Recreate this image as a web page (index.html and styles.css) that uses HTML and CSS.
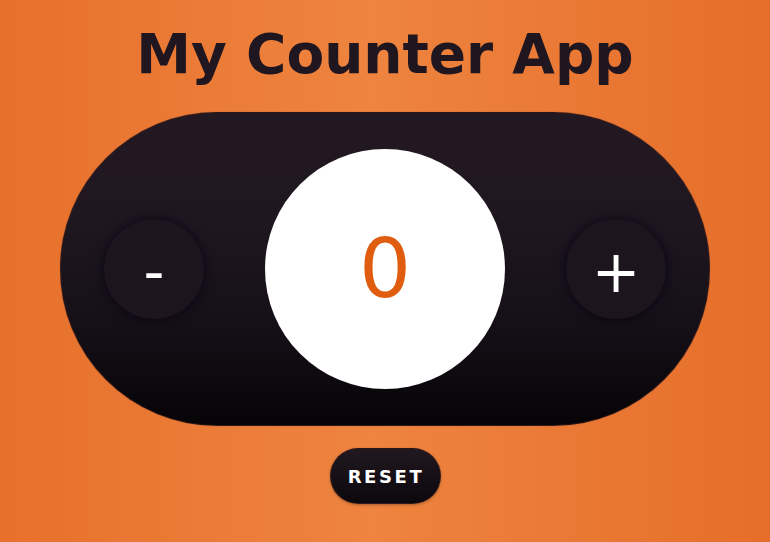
FILE: index.html
```html
<!DOCTYPE html>
<html lang="en">
<head>
<meta charset="utf-8">
<title>My Counter App</title>
<link rel="stylesheet" href="styles.css">
</head>
<body>
  <main class="app">
    <h1 class="title">My Counter App</h1>
    <div class="counter">
      <button class="step" type="button">-</button>
      <div class="display"><span class="value">0</span></div>
      <button class="step" type="button">+</button>
    </div>
    <button class="reset" type="button">RESET</button>
  </main>
</body>
</html>
```

FILE: styles.css
```css
html, body {
  margin: 0;
  height: 100%;
}

body {
  background: linear-gradient(90deg, #e7702c 0%, #ee843f 48%, #e56e2a 100%);
  font-family: "DejaVu Sans", Verdana, sans-serif;
  overflow: hidden;
}

.app {
  display: flex;
  flex-direction: column;
  align-items: center;
  padding-top: 22px;
}

.title {
  margin: 0;
  font-size: 55px;
  font-weight: bold;
  color: #201620;
  line-height: 65px;
}

.counter {
  margin-top: 25px;
  box-sizing: border-box;
  width: 650px;
  height: 314px;
  padding: 0 43px;
  display: flex;
  align-items: center;
  justify-content: space-between;
  border-radius: 157px;
  border: 1px solid rgba(60, 30, 30, 0.7);
  background: linear-gradient(180deg, #221821 0%, #1f1720 35%, #140f16 70%, #060407 100%);
  box-shadow: 0 0 1px rgba(0, 0, 0, 0.4);
}

.step {
  width: 100px;
  height: 100px;
  border-radius: 50%;
  border: none;
  padding: 6px 0 0;
  background: #1c151d;
  color: #ffffff;
  font-family: "DejaVu Sans", Verdana, sans-serif;
  font-size: 58px;
  line-height: 1;
  box-shadow: 0 0 12px rgba(5, 3, 20, 0.8);
  display: flex;
  align-items: center;
  justify-content: center;
}

.display {
  width: 240px;
  height: 240px;
  border-radius: 50%;
  background: #ffffff;
  display: flex;
  align-items: center;
  justify-content: center;
}

.value {
  color: #e05d0f;
  font-size: 82px;
  line-height: 1;
}

.reset {
  margin-top: 22px;
  width: 111px;
  height: 56px;
  border-radius: 28px;
  border: 1px solid rgba(60, 30, 30, 0.6);
  background: linear-gradient(180deg, #211820 0%, #0b080c 100%);
  color: #ffffff;
  font-family: "DejaVu Sans", Verdana, sans-serif;
  font-weight: bold;
  font-size: 18px;
  letter-spacing: 2.6px;
  padding: 0 0 0 2px;
  box-shadow: 0 1px 3px rgba(0, 0, 0, 0.3);
}
```
